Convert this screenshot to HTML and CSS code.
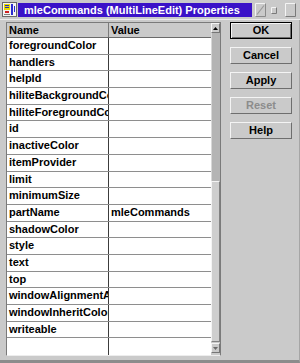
FILE: index.html
```html
<!DOCTYPE html>
<html>
<head>
<meta charset="utf-8">
<link rel="stylesheet" href="styles.css">
</head>
<body>
<div class="window">
  <div class="titlebar">
    <svg class="appicon" width="15" height="15" viewBox="0 0 15 15">
      <rect x="0.5" y="0.5" width="14" height="14" fill="#f4f4f4" stroke="#6a6a6a"/>
      <rect x="2" y="2" width="6" height="6" fill="#e8d800"/>
      <rect x="3" y="3" width="4" height="1" fill="#2030c0"/>
      <rect x="3" y="5" width="4" height="1" fill="#2030c0"/>
      <rect x="9" y="2" width="2" height="11" fill="#2a2ad0"/>
      <rect x="12" y="4" width="1" height="6" fill="#2a2ad0"/>
      <rect x="3" y="9" width="4" height="2" fill="#d02020"/>
      <rect x="2" y="12" width="6" height="1" fill="#808080"/>
    </svg>
    <div class="title">mleCommands (MultiLineEdit) Properties</div>
    <div class="tbtns">
      <svg class="tb1" width="11" height="14" viewBox="0 0 11 14">
        <path d="M0.5 13.5V0.5H10.5" fill="none" stroke="#f4f4f4"/>
        <path d="M10.5 0.5V13.5H0.5" fill="none" stroke="#8a8a8a"/>
        <path d="M2 11.5L9 2.5" stroke="#9a9a9a" stroke-width="1.2"/>
      </svg>
      <svg class="tb2" width="6" height="7" viewBox="0 0 6 7">
        <path d="M0.5 6.5V0.5H5.5" fill="none" stroke="#f4f4f4"/>
        <path d="M5.5 0.5V6.5H0.5" fill="none" stroke="#7a7a7a"/>
      </svg>
      <svg class="tb3" width="11" height="14" viewBox="0 0 11 14">
        <path d="M0.5 13.5V0.5H10.5" fill="none" stroke="#f4f4f4"/>
        <path d="M10.5 0.5V13.5H0.5" fill="none" stroke="#7a7a7a"/>
      </svg>
    </div>
  </div>
  <div class="client">
    <div class="table">
      <div class="grid">
        <div class="row head"><div class="c1">Name</div><div class="c2">Value</div></div>
        <div class="row"><div class="c1">foregroundColor</div><div class="c2"></div></div>
        <div class="row"><div class="c1">handlers</div><div class="c2"></div></div>
        <div class="row"><div class="c1">helpId</div><div class="c2"></div></div>
        <div class="row"><div class="c1">hiliteBackgroundColor</div><div class="c2"></div></div>
        <div class="row"><div class="c1">hiliteForegroundColor</div><div class="c2"></div></div>
        <div class="row"><div class="c1">id</div><div class="c2"></div></div>
        <div class="row"><div class="c1">inactiveColor</div><div class="c2"></div></div>
        <div class="row"><div class="c1">itemProvider</div><div class="c2"></div></div>
        <div class="row"><div class="c1">limit</div><div class="c2"></div></div>
        <div class="row"><div class="c1">minimumSize</div><div class="c2"></div></div>
        <div class="row"><div class="c1">partName</div><div class="c2">mleCommands</div></div>
        <div class="row"><div class="c1">shadowColor</div><div class="c2"></div></div>
        <div class="row"><div class="c1">style</div><div class="c2"></div></div>
        <div class="row"><div class="c1">text</div><div class="c2"></div></div>
        <div class="row"><div class="c1">top</div><div class="c2"></div></div>
        <div class="row"><div class="c1">windowAlignmentA</div><div class="c2"></div></div>
        <div class="row"><div class="c1">windowInheritColor</div><div class="c2"></div></div>
        <div class="row"><div class="c1">writeable</div><div class="c2"></div></div>
        <div class="row last"><div class="c1"></div><div class="c2"></div></div>
      </div>
      <div class="scrollbar">
        <div class="sb-btn">
          <svg width="5" height="3" viewBox="0 0 5 3"><path d="M0 3H5L2.5 0Z" fill="#000"/></svg>
        </div>
        <div class="sb-track"></div>
        <div class="sb-thumb"></div>
        <div class="sb-btn down">
          <svg width="5" height="3" viewBox="0 0 5 3"><path d="M0 0H5L2.5 3Z" fill="#6a6a6a"/></svg>
        </div>
      </div>
    </div>
    <div class="buttons">
      <button class="btn default">OK</button>
      <button class="btn">Cancel</button>
      <button class="btn">Apply</button>
      <button class="btn disabled">Reset</button>
      <button class="btn">Help</button>
    </div>
  </div>
</div>
</body>
</html>
```
FILE: styles.css
```css
html, body {
  margin: 0;
  padding: 0;
}
body {
  width: 300px;
  height: 363px;
  overflow: hidden;
  background: #cacaca;
  font-family: "Liberation Sans", Arial, sans-serif;
}
.window {
  width: 300px;
  height: 363px;
  display: flex;
  flex-direction: column;
  background: #cacaca;
}
.titlebar {
  height: 19px;
  display: flex;
  align-items: flex-start;
  border-bottom: 1px solid #ececec;
}
.appicon {
  margin: 2px 0 0 2px;
  flex: none;
}
.title {
  margin: 3px 0 0 1px;
  height: 14px;
  flex: 1;
  background: #3a12c8;
  color: #fff;
  font-family: "Liberation Sans Narrow", "Liberation Sans", Arial, sans-serif;
  font-weight: bold;
  font-size: 11px;
  line-height: 14px;
  padding-left: 6px;
  white-space: nowrap;
  overflow: hidden;
}
.tbtns {
  width: 48px;
  flex: none;
  display: flex;
  align-items: flex-start;
}
.tb1 {
  margin: 3px 0 0 3px;
}
.tb2 {
  margin: 7px 0 0 5px;
}
.tb3 {
  margin: 3px 0 0 8px;
}
.client {
  flex: 1;
  display: flex;
  align-items: flex-start;
  padding: 2px 0 0 6px;
  border-bottom: 3px solid #8c8c8c;
  border-right: 1px solid #a6a6a6;
}
.table {
  width: 215px;
  height: 334px;
  box-sizing: border-box;
  border: 1px solid #7a7a7a;
  border-bottom-color: #ededed;
  display: flex;
  flex: none;
}
.grid {
  width: 204px;
  height: 332px;
  background: #fff;
  display: flex;
  flex-direction: column;
  overflow: hidden;
  font-weight: bold;
  font-size: 11px;
  color: #000;
}
.row {
  display: flex;
  height: 16.7px;
  flex: none;
  box-sizing: border-box;
  border-bottom: 1px solid #8e8e8e;
  line-height: 15.7px;
}
.row.last {
  border-bottom: none;
}
.row.head {
  height: 15px;
  line-height: 14px;
  background: #cacaca;
  border-bottom-color: #6a6a6a;
}
.c1 {
  width: 102px;
  box-sizing: border-box;
  padding-left: 2px;
  border-right: 1px solid #3c3c3c;
  white-space: nowrap;
  overflow: hidden;
  flex: none;
}
.head .c1 {
  border-right-color: #7a7a7a;
}
.c2 {
  flex: 1;
  padding-left: 2px;
  white-space: nowrap;
  overflow: hidden;
}
.scrollbar {
  width: 9px;
  display: flex;
  flex-direction: column;
  background: #cacaca;
  padding-bottom: 2px;
}
.sb-btn {
  height: 10px;
  box-sizing: border-box;
  border: 1px solid;
  border-color: #f4f4f4 #767676 #767676 #f4f4f4;
  display: flex;
  align-items: center;
  justify-content: center;
  background: #cacaca;
  flex: none;
}
.sb-btn.down {
  margin-top: 1px;
}
.sb-track {
  height: 148px;
  background: #b4b4b4;
  border-left: 1px solid #d8d8d8;
  flex: none;
}
.sb-thumb {
  height: 161px;
  box-sizing: border-box;
  background: #cecece;
  border: 1px solid;
  border-color: #f4f4f4 #828282 #828282 #f4f4f4;
  flex: none;
}
.buttons {
  margin-left: 9px;
  width: 62px;
  display: flex;
  flex-direction: column;
  gap: 8px;
}
.btn {
  height: 17px;
  width: 62px;
  box-sizing: border-box;
  padding: 0;
  margin: 0;
  border: 1px solid;
  border-color: #f4f4f4 #6e6e6e #6e6e6e #f4f4f4;
  background: #cacaca;
  font-family: "Liberation Sans", Arial, sans-serif;
  font-weight: bold;
  font-size: 11px;
  line-height: 15px;
  color: #000;
  text-align: center;
}
.btn.default {
  border: 1px solid #000;
  box-shadow: inset 1px 1px 0 #f4f4f4, inset -1px -1px 0 #6e6e6e;
}
.btn.disabled {
  color: #8c8c8c;
}
```
